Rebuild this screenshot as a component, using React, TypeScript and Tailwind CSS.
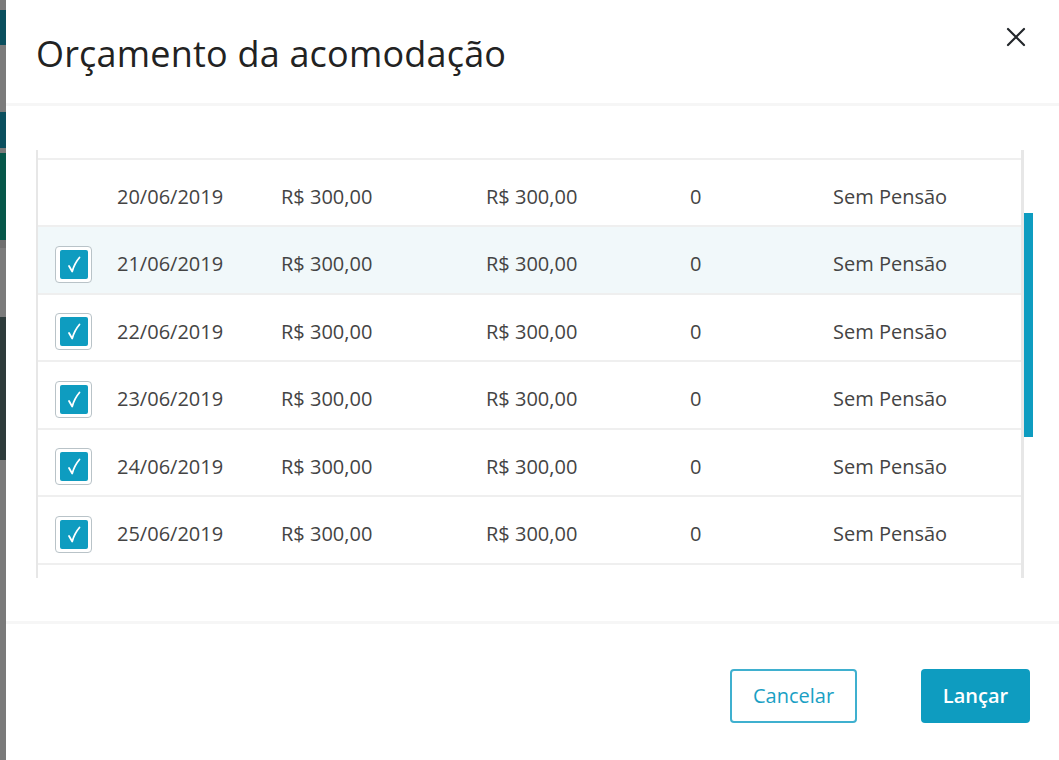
import React from 'react';

const rows = [
  { date: '19/06/2019', checked: false, hidden: true },
  { date: '20/06/2019', checked: false },
  { date: '21/06/2019', checked: true, active: true },
  { date: '22/06/2019', checked: true },
  { date: '23/06/2019', checked: true },
  { date: '24/06/2019', checked: true },
  { date: '25/06/2019', checked: true },
  { date: '26/06/2019', checked: false, hidden: true },
];

const Checkbox: React.FC<{ checked: boolean }> = ({ checked }) => (
  <div className="w-[37px] h-[37px] rounded-[4px] border-[1.5px] border-[#b9c3c8] bg-white flex items-center justify-center">
    {checked && (
      <div className="w-[28px] h-[29px] rounded-[2px] bg-[#0e9cc0] flex items-center justify-center">
        <svg width="28" height="29" viewBox="0 0 28 29" fill="none">
          <path d="M9 16 L12.2 21.5 C14 15 16.5 11 19.5 7.5" stroke="white" strokeWidth="1.8" strokeLinecap="round" strokeLinejoin="round" />
        </svg>
      </div>
    )}
  </div>
);

export default function App() {
  return (
    <div className="flex w-[1059px] h-[760px] overflow-hidden" style={{ fontFamily: '"Open Sans", "Noto Sans", sans-serif' }}>
      {/* darkened page behind the modal */}
      <div className="w-[6px] flex flex-col shrink-0">
        <div className="h-[10px] bg-[#7a7a7a]" />
        <div className="h-[35px] bg-[#0b4f5e]" />
        <div className="h-[67px] bg-[#7b7b7b]" />
        <div className="h-[36px] bg-[#0b4f5e]" />
        <div className="h-[5px] bg-[#7a7a7a]" />
        <div className="h-[87px] bg-[#06574a]" />
        <div className="h-[8px] bg-[#6f6f6f]" />
        <div className="h-[69px] bg-[#7b7b7b]" />
        <div className="h-[143px] bg-[#2e3b3b]" />
        <div className="flex-1 bg-[#7a7a7a]" />
      </div>

      <div className="flex-1 bg-white flex flex-col">
        {/* header */}
        <div className="h-[106px] flex items-start justify-between pl-[30px] pr-[33px] border-b-[3px] border-[#f6f6f6]">
          <h1 className="text-[36px] leading-none text-[#222] mt-[36px] tracking-[0.2px]">Orçamento da acomodação</h1>
          <button className="mt-[27px] w-[20px] h-[20px] flex items-center justify-center">
            <svg width="20" height="20" viewBox="0 0 20 20">
              <path d="M2 2 L18 18 M18 2 L2 18" stroke="#23272b" strokeWidth="2.2" strokeLinecap="round" />
            </svg>
          </button>
        </div>

        {/* body */}
        <div className="pt-[44px] pb-[43px] pl-[30px] pr-[26px] border-b-[3px] border-[#f6f6f6] flex">
          <div className="flex-1 h-[428px] border-l-2 border-r-[3px] border-[#e7e7e7] overflow-hidden">
            <div className="-mt-[58px]">
              {rows.map((r) => (
                <div
                  key={r.date}
                  className={`h-[67.5px] pt-[9px] grid grid-cols-[79px_164px_205px_204px_143px_1fr] items-center border-b-2 border-[#efefef] text-[20px] text-[#444] ${r.active ? 'bg-[#f1f8fa]' : 'bg-white'}`}
                >
                  {r.hidden ? null : (
                    <>
                      <div className="pl-[17px]">{r.checked && <Checkbox checked />}</div>
                      <div>{r.date}</div>
                      <div>R$ 300,00</div>
                      <div>R$ 300,00</div>
                      <div>0</div>
                      <div>Sem Pensão</div>
                    </>
                  )}
                </div>
              ))}
            </div>
          </div>
          <div className="w-[9px] flex flex-col">
            <div className="mt-[63px] h-[224px] bg-[#0e9cc0]" />
          </div>
        </div>

        {/* footer */}
        <div className="flex-1 flex items-start justify-end pt-[45px] pr-[29px] gap-[64px]">
          <button className="w-[127px] h-[54px] rounded-[4px] border-2 border-[#3fb0cf] text-[#1aa0c4] text-[20px] bg-white">
            Cancelar
          </button>
          <button className="w-[109px] h-[54px] rounded-[4px] bg-[#0e9cc0] text-white text-[20px] font-semibold">
            Lançar
          </button>
        </div>
      </div>
    </div>
  );
}
